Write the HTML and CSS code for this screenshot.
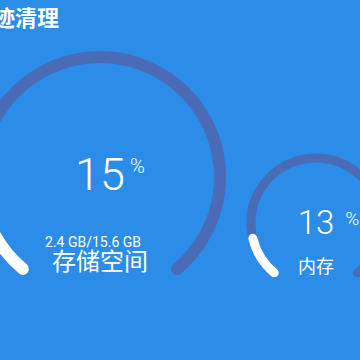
FILE: index.html
```
<!DOCTYPE html>
<html>
<head>
  <meta charset="utf-8">
  <title>痕迹清理</title>
  <link rel="stylesheet" href="styles.css">
</head>
<body>
  <div class="cleaner">
    <h1 class="title">痕迹清理</h1>
    <div class="gauges">
      <div class="gauge big">
        <svg viewBox="0 0 264 264" width="264" height="264">
          <circle class="track" cx="132" cy="132" r="120" stroke-width="12"
            stroke-dasharray="586.4 1000" transform="rotate(130 132 132)" />
          <circle class="fill" cx="132" cy="132" r="120" stroke-width="12"
            stroke-dasharray="88 1000" transform="rotate(130 132 132)" />
        </svg>
        <div class="info">
          <div class="value">15<span class="unit">%</span></div>
          <div class="size">2.4 GB/15.6 GB</div>
          <div class="label">存储空间</div>
        </div>
      </div>
      <div class="gauge small">
        <svg viewBox="0 0 150 150" width="150" height="150">
          <circle class="track" cx="75" cy="75" r="65" stroke-width="9"
            stroke-dasharray="317.6 1000" transform="rotate(130 75 75)" />
          <circle class="fill" cx="75" cy="75" r="65" stroke-width="9"
            stroke-dasharray="41.3 1000" transform="rotate(130 75 75)" />
        </svg>
        <div class="info">
          <div class="value">13<span class="unit">%</span></div>
          <div class="label">内存</div>
        </div>
      </div>
    </div>
  </div>
</body>
</html>
```

FILE: styles.css
```
html, body {
  margin: 0;
  width: 100%;
  height: 100%;
  overflow: hidden;
  background: #2b8de8;
}
body {
  font-family: Roboto, "Noto Sans CJK SC", sans-serif;
  color: #fff;
}

.cleaner {
  padding-top: 3px;
}

.title {
  margin: 0 0 0 -29px;
  font-family: "Noto Sans CJK SC", sans-serif;
  font-size: 22px;
  font-weight: 700;
  line-height: 26px;
}

.gauges {
  display: flex;
  align-items: flex-start;
  margin-top: 16px;
  margin-left: -32px;
}

.gauge {
  display: grid;
  flex-shrink: 0;
}
.gauge svg, .gauge .info {
  grid-area: 1 / 1;
}
.gauge svg {
  display: block;
}
.gauge circle {
  fill: none;
  stroke-linecap: round;
}
.gauge .track {
  stroke: #4a6bb5;
}
.gauge .fill {
  stroke: #fff;
}

.gauge .info {
  display: flex;
  flex-direction: column;
  align-items: center;
}
.gauge .value {
  position: relative;
  font-weight: 300;
  line-height: 1;
}
.gauge .unit {
  position: absolute;
  left: 100%;
  top: 0;
}

.big .info {
  padding-top: 107px;
}
.big .value {
  font-size: 45px;
}
.big .unit {
  font-size: 20px;
  margin-left: 5px;
  top: 4px;
}
.big .size {
  margin-top: 37px;
  margin-right: 14px;
  font-size: 14px;
  line-height: 16px;
}
.big .label {
  font-size: 24px;
  line-height: 24px;
}

.small {
  margin-left: 9px;
  margin-top: 103px;
}
.small .info {
  padding-top: 58px;
}
.small .value {
  font-size: 33px;
}
.small .unit {
  font-size: 19px;
  margin-left: 11px;
  top: 3px;
}
.small .label {
  margin-top: 17px;
  font-size: 18px;
  line-height: 22px;
}
```
